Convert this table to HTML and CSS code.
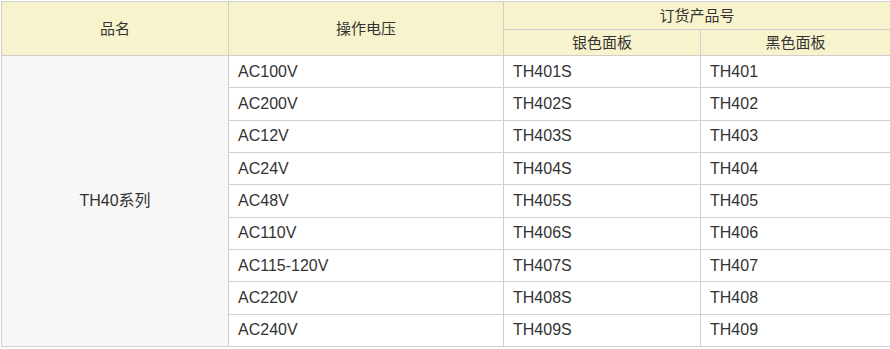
FILE: index.html
```html
<!DOCTYPE html>
<html>
<head>
<meta charset="utf-8">
<link rel="stylesheet" href="styles.css">
</head>
<body>
<table class="spec">
  <colgroup>
    <col class="c1"><col class="c2"><col class="c3"><col class="c4">
  </colgroup>
  <thead>
    <tr class="h1">
      <th rowspan="2">品名</th>
      <th rowspan="2">操作电压</th>
      <th colspan="2">订货产品号</th>
    </tr>
    <tr class="h2">
      <th>银色面板</th>
      <th>黑色面板</th>
    </tr>
  </thead>
  <tbody>
    <tr><td class="name" rowspan="9">TH40系列</td><td>AC100V</td><td>TH401S</td><td>TH401</td></tr>
    <tr><td>AC200V</td><td>TH402S</td><td>TH402</td></tr>
    <tr><td>AC12V</td><td>TH403S</td><td>TH403</td></tr>
    <tr><td>AC24V</td><td>TH404S</td><td>TH404</td></tr>
    <tr><td>AC48V</td><td>TH405S</td><td>TH405</td></tr>
    <tr><td>AC110V</td><td>TH406S</td><td>TH406</td></tr>
    <tr><td>AC115-120V</td><td>TH407S</td><td>TH407</td></tr>
    <tr><td>AC220V</td><td>TH408S</td><td>TH408</td></tr>
    <tr><td>AC240V</td><td>TH409S</td><td>TH409</td></tr>
  </tbody>
</table>
</body>
</html>
```
FILE: styles.css
```css
html, body {
  margin: 0;
  padding: 0;
  background: #fff;
}
body {
  padding: 1px 0 0 1px;
  font-family: Arial, "Liberation Sans", "Noto Sans CJK SC", sans-serif;
  font-size: 16px;
  color: #333;
}
.spec {
  border-collapse: collapse;
  table-layout: fixed;
  width: 889px;
}
.c1 { width: 227px; }
.c2 { width: 275px; }
.c3 { width: 197px; }
.c4 { width: 190px; }
.spec th, .spec td {
  border: 1px solid #cfcfcf;
  padding: 0 0 0 9px;
  line-height: 18px;
  vertical-align: middle;
}
.spec th {
  background: #f7f3cc;
  font-weight: normal;
  font-size: 15px;
  text-align: center;
  padding: 0;
}
.h1 th { height: 27px; }
.h2 th { height: 25px; }
.spec td { height: 31.33px; text-align: left; }
.spec td.name {
  background: #f7f7f7;
  text-align: center;
  padding: 0;
}
```
